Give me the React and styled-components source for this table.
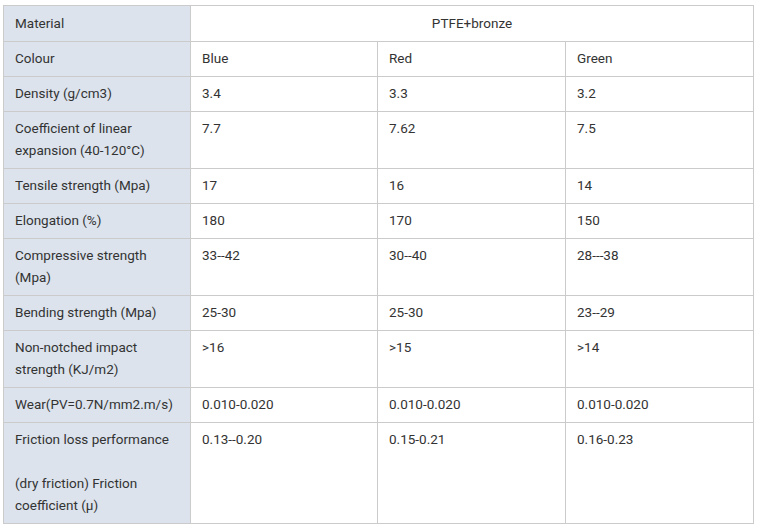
import React from "react";
import styled, { createGlobalStyle } from "styled-components";

const Global = createGlobalStyle`
  html, body { margin: 0; padding: 0; background: #fff; }
  body { font-family: Roboto, "Liberation Sans", Arial, sans-serif; }
`;

const Wrap = styled.div`
  padding: 5px 0 0 3px;
`;

const Table = styled.table`
  border-collapse: collapse;
  table-layout: fixed;
  width: 750px;
  font-family: Roboto, "Liberation Sans", Arial, sans-serif;
  font-size: 13.5px;
  line-height: 22px;
  color: #333;
`;

const Col = styled.col`
  width: ${(p) => p.$w}px;
`;

const Th = styled.th`
  background: #dce3ed;
  border: 1px solid #cbcbcb;
  padding: ${(p) => (p.$first ? 6 : 5)}px 11px 7px;
  text-align: left;
  vertical-align: top;
  font-weight: 400;
`;

const Td = styled.td`
  border: 1px solid #cbcbcb;
  padding: 5px 11px 7px;
  text-align: ${(p) => (p.$center ? "center" : "left")};
  vertical-align: ${(p) => (p.$center ? "middle" : "top")};
  background: #fff;
`;

const rows = [
  ["Colour", "Blue", "Red", "Green"],
  ["Density (g/cm3)", "3.4", "3.3", "3.2"],
  ["Coefficient of linear expansion (40-120°C)", "7.7", "7.62", "7.5"],
  ["Tensile strength (Mpa)", "17", "16", "14"],
  ["Elongation (%)", "180", "170", "150"],
  ["Compressive strength (Mpa)", "33--42", "30--40", "28---38"],
  ["Bending strength (Mpa)", "25-30", "25-30", "23--29"],
  ["Non-notched impact strength (KJ/m2)", ">16", ">15", ">14"],
  ["Wear(PV=0.7N/mm2.m/s)", "0.010-0.020", "0.010-0.020", "0.010-0.020"],
];

export default function App() {
  return (
    <>
      <Global />
      <Wrap>
        <Table>
          <colgroup>
            <Col $w={187} />
            <Col $w={187} />
            <Col $w={188} />
            <Col $w={188} />
          </colgroup>
          <tbody>
            <tr>
              <Th $first>Material</Th>
              <Td colSpan={3} $center>
                PTFE+bronze
              </Td>
            </tr>
            {rows.map((r) => (
              <tr key={r[0]}>
                <Th>{r[0]}</Th>
                <Td>{r[1]}</Td>
                <Td>{r[2]}</Td>
                <Td>{r[3]}</Td>
              </tr>
            ))}
            <tr>
              <Th>
                Friction loss performance
                <br />
                <br />
                (dry friction) Friction coefficient (μ)
              </Th>
              <Td>0.13--0.20</Td>
              <Td>0.15-0.21</Td>
              <Td>0.16-0.23</Td>
            </tr>
          </tbody>
        </Table>
      </Wrap>
    </>
  );
}
